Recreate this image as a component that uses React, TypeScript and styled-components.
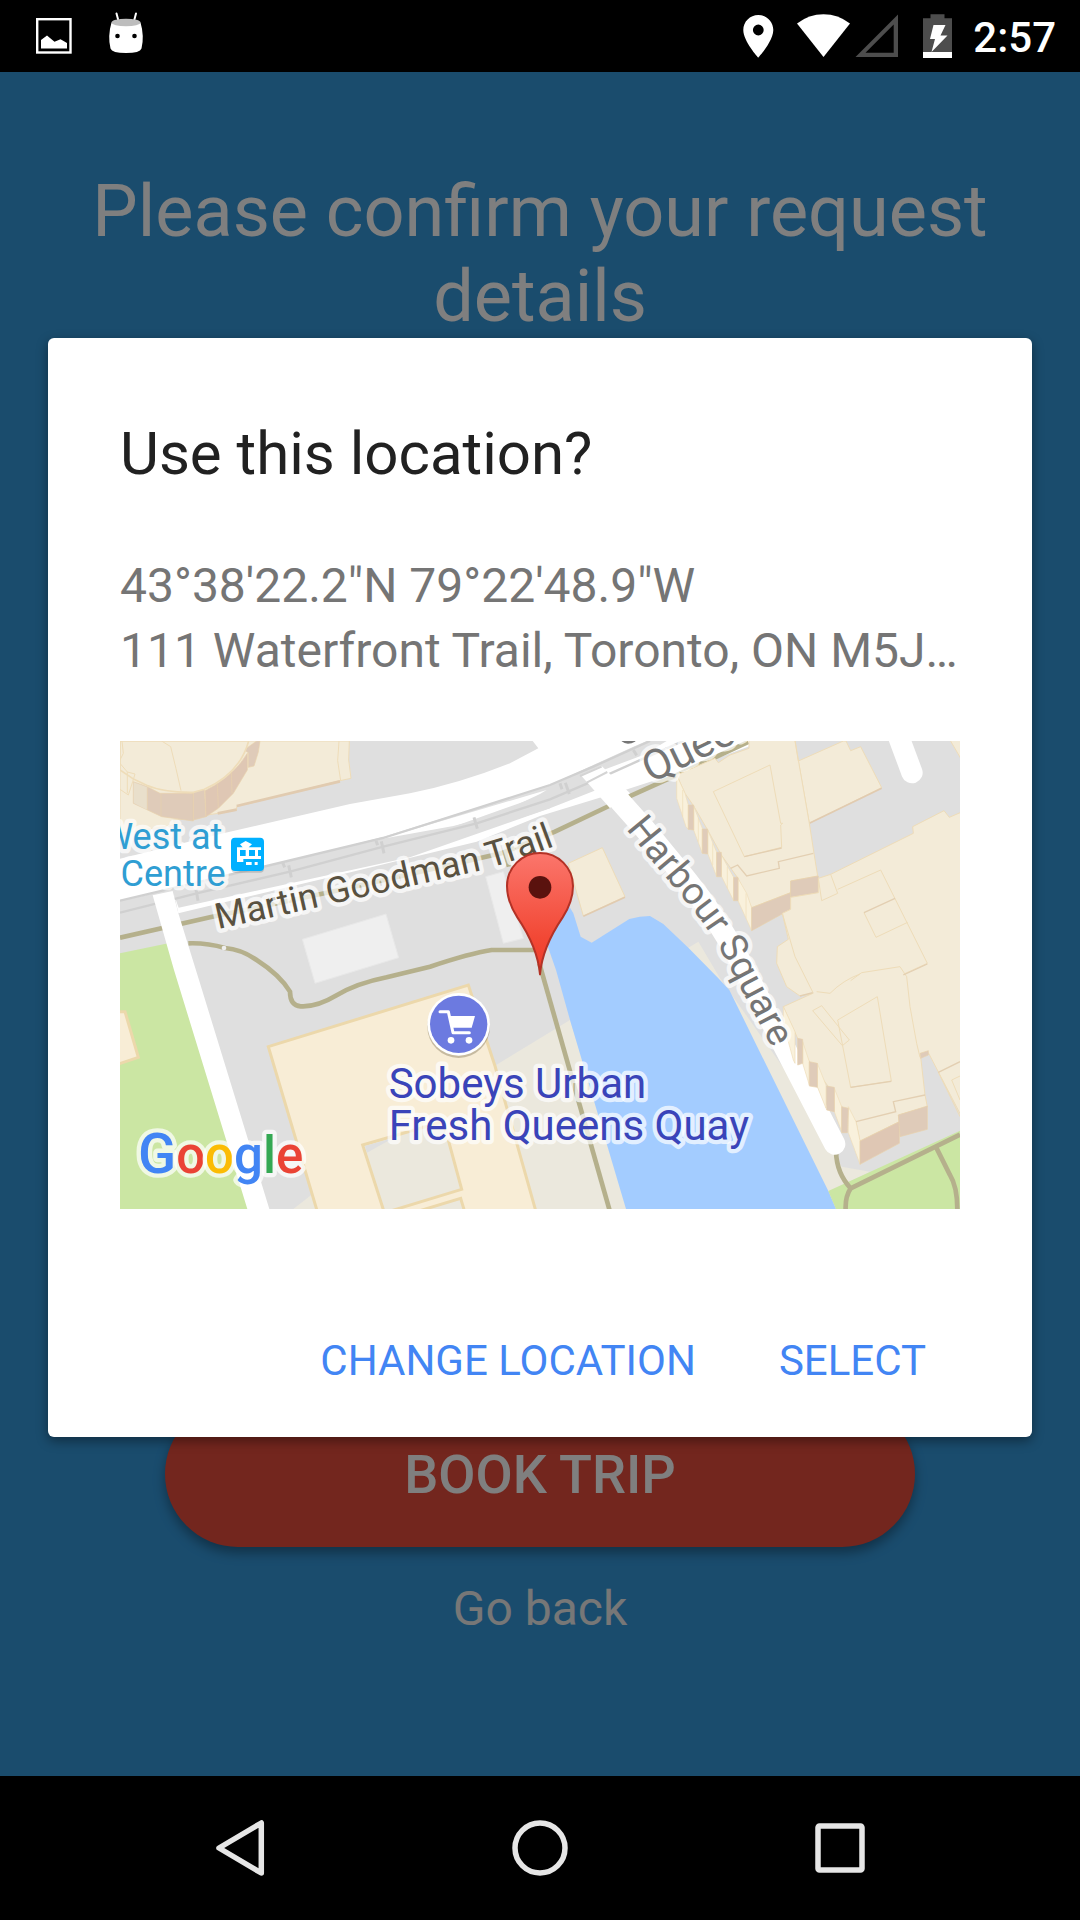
import React from "react";
import styled, { createGlobalStyle } from "styled-components";

const GlobalStyle = createGlobalStyle`
  * { box-sizing: border-box; }
  body { margin: 0; background: #000; font-family: Roboto, "Noto Sans", sans-serif; }
  button { font-family: inherit; border: 0; margin: 0; padding: 0; background: none; cursor: pointer; }
  h1, h2, p { margin: 0; font-weight: 400; }
`;

const Screen = styled.div`
  display: flex;
  flex-direction: column;
  min-height: 100vh;
`;

const StatusBar = styled.header`
  display: flex;
  justify-content: space-between;
  height: 72px;
  padding: 0 24px;
  background: #000;
  color: #fff;
`;

const StatusGroup = styled.div`
  display: flex;
  align-items: center;
`;

const StatusIcon = styled.svg<{ $width: number }>`
  display: block;
  width: ${(p) => p.$width}px;
  height: 72px;
`;

const Clock = styled.time`
  padding: 3px 0 0 7px;
  font-size: 42px;
  font-weight: 500;
  line-height: 48px;
`;

const Page = styled.main`
  position: relative;
  flex: 1;
  display: flex;
  flex-direction: column;
  justify-content: space-between;
  padding: 97px 48px 139px;
  background: #3498db;
`;

const Heading = styled.h1`
  color: #fff;
  font-size: 72px;
  line-height: 85px;
  text-align: center;
`;

const PageActions = styled.div`
  display: flex;
  flex-direction: column;
  align-items: center;
  gap: 34px;
`;

const BookButton = styled.button`
  width: 100%;
  max-width: 750px;
  height: 146px;
  border-radius: 73px;
  background: #e74c3c;
  color: #fff;
  font-size: 54px;
  font-weight: 500;
  box-shadow: 0 6px 12px rgba(0, 0, 0, 0.35);
`;

const BackButton = styled.button`
  color: #eee;
  font-size: 48px;
  line-height: 56px;
`;

const Scrim = styled.div`
  position: absolute;
  inset: 0;
  display: flex;
  align-items: center;
  justify-content: center;
  padding: 0 48px 73px;
  background: rgba(0, 0, 0, 0.5);
`;

const Dialog = styled.section`
  display: flex;
  flex-direction: column;
  flex: 1;
  min-width: 0;
  padding: 81px 72px 23px;
  border-radius: 6px;
  background: #fff;
  box-shadow: 0 4px 12px rgba(0, 0, 0, 0.4);
`;

const DialogTitle = styled.h2`
  color: #212121;
  font-size: 60px;
  line-height: 70px;
`;

const Address = styled.address`
  margin: 64px 0 58px;
  color: #757575;
  font-size: 48px;
  font-style: normal;
  line-height: 65px;
`;

const AddressLine = styled.p`
  overflow: hidden;
  text-overflow: ellipsis;
  white-space: nowrap;
`;

const MapView = styled.svg`
  display: block;
  width: 100%;
  font-family: Roboto, "Noto Sans", sans-serif;
`;

const MapLabel = styled.text`
  paint-order: stroke;
  stroke: rgba(255, 255, 255, 0.7);
  stroke-width: 26px;
  stroke-linejoin: round;
`;

const DialogActions = styled.div`
  display: flex;
  justify-content: flex-end;
  gap: 35px;
  margin-top: 97px;
  padding-right: 10px;
`;

const TextButton = styled.button`
  height: 108px;
  padding: 0 24px;
  color: #4285f4;
  font-size: 42px;
`;

const NavBar = styled.nav`
  display: grid;
  grid-template-columns: repeat(3, 1fr);
  height: 144px;
  padding: 0 90px;
  background: #000;
`;

const NavButton = styled.button`
  display: flex;
  align-items: center;
  justify-content: center;
`;

const roof = { fill: "#f3ebd8", stroke: "#eedcb8", strokeWidth: 3 };
const cream = { fill: "#f9f1dc", stroke: "#eedcb8", strokeWidth: 2 };
const shade = { fill: "#dfcbb9", stroke: "#e8d2ac", strokeWidth: 2 };
const mall = { fill: "#f8edd6", stroke: "#ecd8ab", strokeWidth: 9 };

function MapPicture() {
  return (
    <MapView viewBox="30 33 2520 1404" role="img" aria-label="Map of the chosen location">
      <defs>
        <linearGradient id="pin" x1="0" y1="0" x2="0" y2="1">
          <stop offset="0" stopColor="#fb766c" />
          <stop offset="0.7" stopColor="#f24835" />
          <stop offset="1" stopColor="#ee3b28" />
        </linearGradient>
        <path id="goodman" d="M324 598L620 532L1100 424Q1210 396 1370 334" />
        <path id="harbour" d="M1547 296L1636 405L1729 516Q1796 595 1842 680L1900 790L2040 1055" />
        <path id="queens" d="M1622 160L1780 84L2120 -80" />
      </defs>
      <rect x="30" y="33" width="2520" height="1404" fill="#dfdfdf" />

      {/* ground, water and parks */}
      <path fill="#ebe8dd" d="M1380 870L1150 1010L770 1265L550 1437H1560Z" />
      <path fill="#ebe8dd" d="M1735 653L1765 635L1830 745L2050 1055Q2130 1190 2195 1310L2280 1325L2155 1385Z" />
      <path fill="#a3ccff" d="M1375 525L1390 550L1412 620L1445 638L1558 567Q1590 558 1620 558L1660 582L1735 653L1825 745L1858 780L2155 1383L2178 1437H1548L1380 870L1338 720L1310 640Z" />
      <path fill="#cbe6a3" d="M2155 1383L2550 1202V1437H2178Z" />
      <path fill="#cbe6a3" d="M30 670L175 640L420 1437H30Z" />
      <path {...mall} d="M20 845H45L85 982L20 1004Z" />

      {/* upper left towers */}
      <path {...roof} d="M30 33H718L716 90L723 145L690 152L380 230V240L325 250L190 270L195 285L30 310Z" />
      <path {...roof} fill="none" d="M687 33L683 92L692 152" />
      <path {...shade} d="M70 155L112 170L150 190H250V273L155 260L70 220Z" />
      <path fill="#e9dfcb" d="M71 157L112 172V240L71 219Z" />
      <path {...shade} d="M112 172V240M153 192V258" />
      <path {...shade} d="M250 186L283 175L288 260L250 270Z" />
      <path {...shade} fill="#dfc7b4" d="M285 182Q370 140 412 70V120L370 190L325 235L288 260Z" />
      <path {...shade} d="M322 160L325 233M364 125L366 190" />
      <path {...shade} d="M402 60L440 33H450L445 66L432 108L415 112V68Z" />
      <path {...roof} strokeWidth={5} d="M72 148L110 166Q160 188 250 187L283 178Q390 130 416 33H30V120Z" />
      <path {...roof} fill="none" d="M155 33L182 50L198 116L213 182M36 33L40 70L30 90M30 100L52 126L75 132L68 155L55 195L30 178M52 126V190" />
      <path stroke="#e1cbb0" strokeWidth="8" d="M380 228L690 154M323 250L380 239" />

      {/* roads and tram tracks */}
      <path fill="#fff" d="M30 386L330 312L720 222L900 190Q1050 160 1200 100L1285 55L1268 33H1960L1700 130L1545 180L1290 258L1100 335L700 432L205 550L190 480L128 495L30 512Z" />
      <path fill="#dfdfdf" d="M30 514L520 398L820 320L1320 165L1450 105L1570 50L1610 33H1670L1600 75L1480 120L1425 143L1465 178L1320 235L900 382L206 533L188 484L128 497L140 590L30 615Z" />
      <path fill="#fff" d="M810 328L1310 180L1290 192L1150 258L1030 288Z" />
      <path fill="#dfdfdf" d="M1030 290L1290 198L1320 235L1000 340Z" />
      <g fill="none" stroke="#d0d0d0" strokeWidth="7">
        <path d="M30 512L520 396L820 324L1320 165L1450 110L1620 33M30 548L260 490L540 425L820 350L1100 280L1320 208L1480 140L1580 95L1720 33" />
        <path strokeWidth="9" d="M258 478L264 512M518 398L524 412M536 406L544 442M798 332L803 346M814 334L822 370M1092 262L1102 296M1350 160L1356 178M1366 158L1378 192M1570 60L1580 76" />
      </g>
      <g fill="none" stroke="#b5b08c" strokeWidth="14">
        <path d="M30 623L300 562L700 478L1180 368L1335 305L1560 198L1690 140L1915 36" />
        <path d="M1182 360L1197 410" />
        <path d="M235 640Q290 638 345 654Q395 658 440 690Q510 735 540 785Q540 826 572 829Q620 832 680 796Q740 760 830 742L960 710Q1080 670 1145 660H1290" />
        <path d="M1288 700L1500 1445" />
        <path d="M2178 1265Q2180 1330 2222 1375L2550 1214M2222 1375Q2205 1400 2207 1440M2480 1255L2520 1335Q2542 1370 2542 1440" />
      </g>
      <circle cx="342" cy="654" r="7" fill="#eee" />
      <path fill="#fff" d="M128 496L188 483L205 550L267 750L478 1437H412L192 720Z" />
      <path fill="#fff" d="M1412 135L1475 108L1560 190L1500 235Z" />
      <path fill="none" stroke="#fff" strokeWidth="64" strokeLinecap="round" strokeLinejoin="round" d="M1500 180L1600 292L1730 450Q1820 560 1900 710L1950 810L2174 1242" />
      <path stroke="#fff" strokeWidth="64" strokeLinecap="round" d="M2365 18L2406 128" />
      <path stroke="#d4d4d4" strokeWidth="6" d="M1410 138L1475 110M1430 158L1492 126" />

      {/* low blocks */}
      <g fill="#efefef" stroke="#e8e8e8" strokeWidth="3">
        <path d="M577 628L828 552L866 683L615 760Z" />
        <path d="M1127 440L1180 425L1240 625L1180 640Z" />
      </g>
      <path {...mall} d="M475 950L1075 765L1155 1008L1278 1445H622Z" />
      <path {...mall} fill="#ebe8dd" d="M758 1245L1000 1175L1055 1378L835 1445H822Z" />
      <path {...mall} fill="#ebe8dd" d="M920 1445L1052 1405L1064 1445Z" />
      <path fill="#dfdfdf" d="M765 1248L850 1224L771 1268Z" />

      {/* eastern towers */}
      <path {...roof} d="M1375 400L1477 353L1545 500L1420 558Z" />
      <path stroke="#e1cbb0" strokeWidth="5" d="M1420 559L1545 502" />
      <path {...roof} d="M2065 93L2200 33H2208L2222 62L2252 50L2315 173L2098 280Z" />
      <path stroke="#e1cbb0" strokeWidth="5" d="M2098 280L2315 175" />
      <path {...roof} d="M2520 30H2555V90Z" />
      <path {...roof} d="M1700 135L1815 85L1825 98L1860 75L1917 55V30H2055L2065 90L2098 280L2112 370L2123 438L2042 453V488L1925 533L1905 490L1884 445L1834 375L1793 300L1751 228L1725 190Z" />
      <g {...cream}>
        <path d="M1700 135L1725 190L1735 225V298L1728 290L1700 205Z" />
        <path d="M1751 228L1777 295V370L1751 300Z" />
        <path d="M1793 300L1820 367V440L1793 370Z" />
        <path d="M1834 375L1871 442V512L1834 438Z" />
        <path d="M1884 445L1910 490L1925 533V602L1884 512Z" />
      </g>
      <path {...cream} fill="none" d="M1718 180V260M1765 265V335M1808 340V405M1852 410V475M1908 490V565" />
      <g {...shade}>
        <path d="M1735 225H1751V300L1735 298Z" />
        <path d="M1777 297H1793V372L1777 370Z" />
        <path d="M1820 367H1834V440H1820Z" />
        <path d="M1871 442H1884V512H1871Z" />
        <path d="M1925 533L2042 488V538L1925 602Z" />
        <path d="M2042 453L2125 438V488L2042 502Z" />
      </g>
      <path {...roof} fill="none" d="M1810 185L1980 105L2012 280H2018L2012 285L2015 352L1903 380ZM2055 33L2065 93" />
      <path fill="none" stroke="#e3cfb2" strokeWidth="4" d="M1903 380L2015 354M1862 415L1883 405L1910 438L2008 415L2005 395L2110 370" />

      <path {...roof} d="M2125 445L2162 433L2410 310L2408 290L2502 242L2518 262L2555 246V1160L2455 968L2432 980L2445 1095L2452 1130L2365 1155L2368 1175L2250 1233L2238 1175L2195 1130L2148 1060L2098 995L2063 925L2020 830L2108 790L2070 798L2030 770L2000 700L2002 650L2035 628L2017 550L2042 538V502L2125 488Z" />
      <g {...cream}>
        <path d="M2020 830L2055 905V1000L2050 990L2020 880Z" />
        <path d="M2078 935L2098 995V1065L2078 1000Z" />
        <path d="M2122 1000L2148 1065V1135L2122 1070Z" />
        <path d="M2173 1075L2195 1130V1205L2173 1145Z" />
        <path d="M2215 1130L2238 1175L2250 1233V1303L2215 1208Z" />
      </g>
      <g {...shade}>
        <path d="M2063 925L2078 928V1000L2063 1005Z" />
        <path d="M2098 995L2122 1000V1072L2098 1068Z" />
        <path d="M2150 1068L2173 1072V1145L2150 1140Z" />
        <path d="M2195 1130L2215 1135L2212 1208H2195Z" />
        <path fill="#dfc7b4" d="M2250 1233L2368 1175V1240L2250 1303Z" />
        <path d="M2365 1155L2452 1128V1198L2370 1220Z" />
        <path d="M2430 970L2455 962V975L2432 985Z" />
      </g>
      <path {...roof} fill="none" d="M2183 478L2312 420L2452 700L2380 733M2262 548L2298 622L2393 577M2162 433L2183 490L2135 512L2125 445M2017 550L2055 680L2110 790M2222 752L2255 728L2370 710L2390 740L2400 830L2420 940L2430 982M2120 785L2160 790Q2200 750 2250 732M2183 870L2302 800L2344 1053L2222 1072ZM2108 842L2135 827L2218 930L2197 947ZM2525 1050L2550 1038M2525 1050L2550 1110M2485 1027L2550 1160" />
      <path fill="none" stroke="#e3cfb2" strokeWidth="4" d="M2262 548L2355 505M2380 735L2452 702M2222 1072L2344 1054M2238 1175L2357 1145L2350 1115L2445 1095M2485 1027L2550 995M2070 798L2108 788" />

      {/* street names */}
      <path fill="none" stroke="#757575" strokeWidth="10" d="M1538 30Q1552 42 1574 30" />
      <MapLabel fill="#757575" fontSize="126"><textPath href="#queens">Queens</textPath></MapLabel>
      <MapLabel fill="#757575" fontSize="114"><textPath href="#harbour">Harbour Square</textPath></MapLabel>
      <g fontSize="108">
        <MapLabel fill="#595140"><textPath href="#goodman">Martin Goodman Trail</textPath></MapLabel>
        <MapLabel fill="#2f9ed3" x="337" y="358" textAnchor="end">West at</MapLabel>
        <MapLabel fill="#2f9ed3" x="347" y="467" textAnchor="end">Centre</MapLabel>
      </g>

      {/* tram stop */}
      <rect x="364" y="328" width="98" height="100" rx="12" fill="#000" opacity="0.15" />
      <rect x="363" y="323" width="99" height="100" rx="12" fill="#00b0ff" />
      <path fill="#fff" d="M390 343L407 333L426 343L416 352H453V396H381V352H398Z" />
      <path fill="#00b0ff" d="M390 360H407V378H390ZM417 360H435V378H417ZM444 360H453V378H444ZM400 387H453V396H400Z" />
      <path fill="#fff" d="M408 396H425V405H408ZM434 396H443V405H434Z" />

      {/* supermarket */}
      <circle cx="1046" cy="890" r="94" fill="#6b5b3d" opacity="0.35" />
      <circle cx="1046" cy="883" r="94" fill="#fff" />
      <circle cx="1046" cy="883" r="86" fill="#6c7ae0" />
      <path fill="none" stroke="#fff" strokeWidth="9" strokeLinecap="round" strokeLinejoin="round" d="M990 845H1015L1029 908H1078" />
      <path fill="#fff" d="M1018 858H1095L1085 893H1027Z" />
      <circle cx="1023" cy="931" r="10" fill="#fff" />
      <circle cx="1077" cy="931" r="10" fill="#fff" />
      <g fontSize="126" fill="#3a44b9">
        <MapLabel x="836" y="1103">Sobeys Urban</MapLabel>
        <MapLabel x="836" y="1229">Fresh Queens Quay</MapLabel>
      </g>

      <MapLabel x="84" y="1330" fontSize="153" fontWeight="500">
        <tspan fill="#4285f4" fontSize="168">G</tspan>
        <tspan fill="#ea4335">o</tspan>
        <tspan fill="#fbbc05">o</tspan>
        <tspan fill="#4285f4">g</tspan>
        <tspan fill="#34a853">l</tspan>
        <tspan fill="#ea4335">e</tspan>
      </MapLabel>

      {/* place marker */}
      <path fill="url(#pin)" stroke="#b33226" strokeWidth="6" strokeLinejoin="round" d="M1290 733C1284 665 1256 612 1222 562C1200 528 1191 500 1191 468A99 99 0 0 1 1389 468C1389 500 1380 528 1358 562C1324 612 1296 665 1290 733Z" />
      <circle cx="1290" cy="472" r="34" fill="#5a120e" />
    </MapView>
  );
}

export default function App() {
  return (
    <Screen>
      <GlobalStyle />
      <StatusBar>
        <StatusGroup>
          <StatusIcon $width={72} viewBox="24 0 72 72" aria-hidden="true">
            <rect x="37.2" y="19.2" width="33.3" height="33.3" fill="none" stroke="#fff" strokeWidth="2.4" />
            <path fill="#fff" d="M41 48.500V40L47 35.500L54.500 41.800L60.500 39.300L67 43V48.500Z" />
          </StatusIcon>
          <StatusIcon $width={60} viewBox="96 0 60 72" aria-hidden="true">
            <path stroke="#fff" strokeWidth="2" strokeLinecap="round" d="M116.500 13.500L118.500 21M136 13.500L134 21" />
            <path fill="#fff" d="M111.500 22.500Q126 28 140.500 22.500Q144.500 36 141.500 48.500Q140 53 126 53Q112 53 110.500 48.500Q107.500 36 111.500 22.500Z" />
            <ellipse cx="126" cy="22.500" rx="14.500" ry="3.800" fill="#bdbdbd" />
            <circle cx="117.500" cy="36" r="2.300" fill="#000" />
            <circle cx="134.500" cy="36" r="2.300" fill="#000" />
          </StatusIcon>
        </StatusGroup>
        <StatusGroup>
          <StatusIcon $width={56} viewBox="730 0 56 72" aria-hidden="true">
            <path fill="#fff" fillRule="evenodd" d="M758.300 15C750 15 743.300 21.700 743.300 30C743.300 41.200 758.300 57.700 758.300 57.700S773.300 41.200 773.300 30C773.300 21.700 766.600 15 758.300 15ZM758.300 24.600A5.400 5.400 0 1 1 758.300 35.400A5.400 5.400 0 0 1 758.300 24.600Z" />
          </StatusIcon>
          <StatusIcon $width={66} viewBox="786 0 66 72" aria-hidden="true">
            <path fill="#fff" d="M823.500 57L797 23.500Q809 14.300 823.500 14.300T850 23.500Z" />
          </StatusIcon>
          <StatusIcon $width={56} viewBox="852 0 56 72" aria-hidden="true">
            <path fill="#4d4d4d" fillRule="evenodd" d="M855.500 57L898 14.500V57ZM865.500 52.700H893.700V24.500Z" />
          </StatusIcon>
          <StatusIcon $width={58} viewBox="908 0 58 72" aria-hidden="true">
            <path fill="#4d4d4d" d="M923 18.300H930.500V14.300H944.500V18.300H952V52H923Z" />
            <path fill="#fff" d="M923 52H952V58H923ZM933.500 25H945.500L940.500 35.500H947.500L931.500 52L935 39H930Z" />
          </StatusIcon>
          <Clock>2:57</Clock>
        </StatusGroup>
      </StatusBar>

      <Page>
        <Heading>Please confirm your request details</Heading>
        <PageActions>
          <BookButton type="button">BOOK TRIP</BookButton>
          <BackButton type="button">Go back</BackButton>
        </PageActions>
        <Scrim>
          <Dialog role="dialog" aria-modal="true" aria-labelledby="dialog-title">
            <DialogTitle id="dialog-title">Use this location?</DialogTitle>
            <Address>
              <AddressLine>43°38'22.2"N 79°22'48.9"W</AddressLine>
              <AddressLine>111 Waterfront Trail, Toronto, ON M5J…</AddressLine>
            </Address>
            <MapPicture />
            <DialogActions>
              <TextButton type="button">CHANGE LOCATION</TextButton>
              <TextButton type="button">SELECT</TextButton>
            </DialogActions>
          </Dialog>
        </Scrim>
      </Page>

      <NavBar>
        <NavButton type="button" aria-label="Back">
          <svg width="60" height="60" viewBox="210 1818 60 60">
            <path fill="none" stroke="#e6e6e6" strokeWidth="5.500" strokeLinejoin="round" d="M219 1848L261.300 1823V1873Z" />
          </svg>
        </NavButton>
        <NavButton type="button" aria-label="Home">
          <svg width="60" height="60" viewBox="0 0 60 60">
            <circle cx="30" cy="30" r="25" fill="none" stroke="#e6e6e6" strokeWidth="5.500" />
          </svg>
        </NavButton>
        <NavButton type="button" aria-label="Recent apps">
          <svg width="60" height="60" viewBox="0 0 60 60">
            <rect x="8" y="8" width="44" height="44" rx="1.500" fill="none" stroke="#e6e6e6" strokeWidth="5.500" />
          </svg>
        </NavButton>
      </NavBar>
    </Screen>
  );
}
